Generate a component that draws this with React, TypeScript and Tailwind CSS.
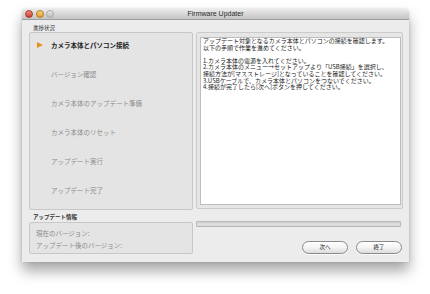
import React from "react";

const jp = { fontFamily: '"Noto Sans CJK JP", "Noto Sans", sans-serif' };

const steps = [
  "カメラ本体とパソコン接続",
  "バージョン確認",
  "カメラ本体のアップデート準備",
  "カメラ本体のリセット",
  "アップデート実行",
  "アップデート完了",
];

const lines = [
  "アップデート対象となるカメラ本体とパソコンの接続を確認します。",
  "以下の手順で作業を進めてください。",
  "\u00a0",
  "1.カメラ本体の電源を入れてください。",
  "2.カメラ本体のメニュー→セットアップより「USB接続」を選択し、",
  "接続方法が[マスストレージ]となっていることを確認してください。",
  "3.USBケーブルで、カメラ本体とパソコンをつないでください。",
  "4.接続が完了したら[次へ]ボタンを押してください。",
];

function Btn({ label }: { label: string }) {
  return (
    <div
      className="w-[46px] h-[13px] rounded-full border border-[#8a8a8a] bg-gradient-to-b from-[#ffffff] via-[#f4f4f4] to-[#dcdcdc] flex items-center justify-center text-[5.5px] text-[#222] shadow-[0_1px_0_rgba(255,255,255,0.8)]"
      style={jp}
    >
      {label}
    </div>
  );
}

export default function App() {
  return (
    <div className="w-[430px] h-[294px] bg-white pt-[9px] pl-[22px]">
      <div className="w-[387px] h-[253px] rounded-t-[4px] bg-[#ececec] shadow-[0_9px_14px_rgba(0,0,0,0.35),0_0_3px_rgba(0,0,0,0.15)] flex flex-col overflow-hidden">
        {/* title bar */}
        <div className="h-[11px] bg-gradient-to-b from-[#ebebeb] to-[#c4c4c4] border-b border-[#9e9e9e] flex items-center relative shrink-0">
          <div className="flex items-center gap-[2.5px] pl-[3px]">
            <div className="w-[8px] h-[8px] rounded-full bg-gradient-to-b from-[#f08a80] to-[#d0362b] border border-[#a33a30]" />
            <div className="w-[8px] h-[8px] rounded-full bg-gradient-to-b from-[#fbd77e] to-[#e89a1e] border border-[#b0781a]" />
            <div className="w-[8px] h-[8px] rounded-full bg-gradient-to-b from-[#e6e6e6] to-[#bdbdbd] border border-[#a8a8a8]" />
          </div>
          <div
            className="absolute inset-0 flex items-center justify-center text-[7px] text-[#2a2a2a]"
            style={{ fontFamily: '"Liberation Sans", Arial, sans-serif' }}
          >
            Firmware Updater
          </div>
        </div>
        {/* body */}
        <div className="flex flex-1 pl-[7px] gap-[3px]">
          {/* left column */}
          <div className="w-[164px] flex flex-col">
            <div className="h-[12px] flex items-end pl-[4px] pb-[1px] text-[5.5px] text-[#333] leading-none" style={jp}>
              進捗状況
            </div>
            <div className="h-[178px] bg-[#e4e4e4] border border-[#c8c8c8] rounded-[2px] pt-[7px] flex flex-col gap-[19px]">
              {steps.map((s, i) => (
                <div key={s} className="h-[10px] flex items-center relative">
                  {i === 0 && (
                    <svg className="absolute left-[7px] top-[2px]" width="6" height="6" viewBox="0 0 6 6">
                      <polygon points="0,0 6,3 0,6" fill="#e8911e" />
                    </svg>
                  )}
                  <span
                    className={
                      "pl-[21px] text-[6.5px] leading-none " +
                      (i === 0 ? "text-[#1e1e1e] font-bold" : "text-[#8c8c8c]")
                    }
                    style={jp}
                  >
                    {s}
                  </span>
                </div>
              ))}
            </div>
            <div className="h-[12px] flex items-end pl-[4px] pb-[2px] text-[5.5px] text-[#333] font-bold leading-none" style={jp}>
              アップデート情報
            </div>
            <div className="h-[32px] bg-[#e4e4e4] border border-[#c8c8c8] rounded-[2px] pl-[6px] pt-[7px] flex flex-col gap-[5px] text-[6.5px] text-[#8c8c8c] leading-none" style={jp}>
              <div>現在のバージョン:</div>
              <div>アップデート後のバージョン:</div>
            </div>
          </div>
          {/* right column */}
          <div className="w-[207px] flex flex-col pt-[12px]">
            <div className="h-[177px] bg-[#e6e6e6] border border-[#cbcbcb] rounded-[2px] pt-[4px] pl-[3px] pr-[1px] pb-[3px]">
              <div className="h-full bg-white border border-[#bdbdbd] pl-[2px] pt-[0px]">
                {lines.map((l, i) => (
                  <div key={i} className="text-[6px] leading-[6.6px] text-[#1a1a1a] whitespace-nowrap" style={jp}>
                    {l}
                  </div>
                ))}
              </div>
            </div>
            <div className="mt-[12px] h-[6px] w-[205px] rounded-[1px] border border-[#b9b9b9] bg-gradient-to-b from-[#c9c9c9] via-[#e2e2e2] to-[#d4d4d4]" />
            <div className="mt-[14px] flex justify-end gap-[8px] pr-[1px]">
              <Btn label="次へ" />
              <Btn label="終了" />
            </div>
          </div>
        </div>
      </div>
    </div>
  );
}
